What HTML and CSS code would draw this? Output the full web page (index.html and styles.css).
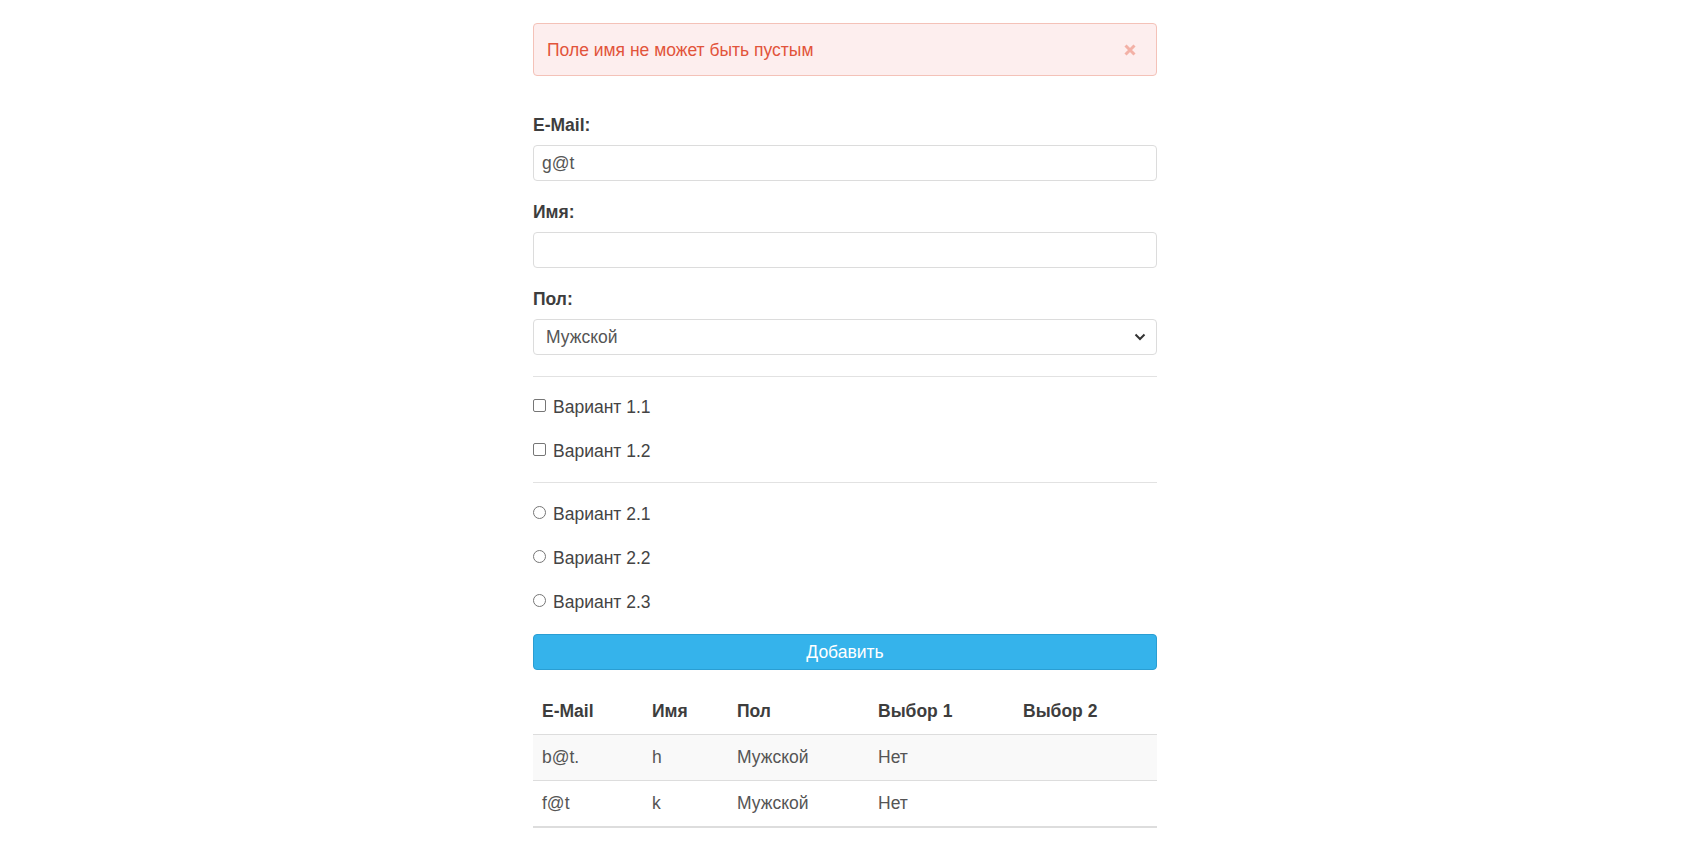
FILE: index.html
```html
<!DOCTYPE html>
<html lang="ru">
<head>
<meta charset="utf-8">
<title>Форма</title>
<link rel="stylesheet" href="styles.css">
</head>
<body>
<div class="container">
  <div class="alert">
    <span class="alert-text">Поле имя не может быть пустым</span>
    <span class="alert-close" aria-label="Закрыть">
      <svg width="12" height="12" viewBox="0 0 12 12"><path d="M1.5 1.5 L10.5 10.5 M10.5 1.5 L1.5 10.5" stroke="#f3b1a6" stroke-width="3" stroke-linecap="butt"/></svg>
    </span>
  </div>

  <form class="form">
    <div class="form-group">
      <label class="label">E-Mail:</label>
      <div class="input">g@t</div>
    </div>
    <div class="form-group">
      <label class="label">Имя:</label>
      <div class="input"></div>
    </div>
    <div class="form-group last">
      <label class="label">Пол:</label>
      <div class="select">
        <span>Мужской</span>
        <svg class="chevron" width="12" height="8" viewBox="0 0 12 8"><path d="M1.5 1.5 L6 6 L10.5 1.5" fill="none" stroke="#333" stroke-width="2"/></svg>
      </div>
    </div>

    <div class="divider"></div>
    <div class="choices">
      <label class="option"><span class="box check"></span>Вариант 1.1</label>
      <label class="option"><span class="box check"></span>Вариант 1.2</label>
    </div>
    <div class="divider"></div>
    <div class="choices radios">
      <label class="option"><span class="box radio"></span>Вариант 2.1</label>
      <label class="option"><span class="box radio"></span>Вариант 2.2</label>
      <label class="option"><span class="box radio"></span>Вариант 2.3</label>
    </div>

    <div class="button">Добавить</div>
  </form>

  <table class="table">
    <colgroup>
      <col class="c1"><col class="c2"><col class="c3"><col class="c4"><col class="c5">
    </colgroup>
    <thead>
      <tr><th>E-Mail</th><th>Имя</th><th>Пол</th><th>Выбор 1</th><th>Выбор 2</th></tr>
    </thead>
    <tbody>
      <tr class="odd"><td>b@t.</td><td>h</td><td>Мужской</td><td>Нет</td><td></td></tr>
      <tr><td>f@t</td><td>k</td><td>Мужской</td><td>Нет</td><td></td></tr>
    </tbody>
  </table>
</div>
</body>
</html>
```

FILE: styles.css
```css
* { box-sizing: border-box; }

html, body {
  margin: 0;
  padding: 0;
  background: #fff;
}

body {
  font-family: "Liberation Sans", Arial, sans-serif;
  font-size: 17.5px;
  line-height: 22px;
  color: #444;
}

.container {
  width: 624px;
  margin: 0 auto;
  padding-top: 23px;
}

.alert {
  display: flex;
  align-items: center;
  justify-content: space-between;
  height: 53px;
  padding: 0 20px 0 13px;
  background: #fdeeee;
  border: 1px solid #f4c2b8;
  border-radius: 4px;
  color: #e2543b;
  margin-bottom: 37px;
}

.alert-close {
  display: flex;
  align-items: center;
}

.form-group {
  margin-bottom: 19px;
}
.form-group.last { margin-bottom: 0; }

.label {
  display: block;
  font-weight: bold;
  color: #3d3d3d;
  padding-top: 1px;
  margin-bottom: 9px;
}

.input, .select {
  height: 36px;
  border: 1px solid #dcdcdc;
  border-radius: 4px;
  background: #fff;
  color: #555;
  display: flex;
  align-items: center;
}

.input { padding: 0 8px; }

.select {
  justify-content: space-between;
  padding: 0 10px 0 12px;
}

.divider {
  border-top: 1px solid #e2e2e2;
  margin-top: 21px;
}
.choices + .divider { margin-top: 0; }

.choices {
  display: flex;
  flex-direction: column;
  gap: 22px;
  padding: 19px 0 20px;
}
.choices.radios { padding: 20px 0 21px; }

.option {
  display: flex;
  align-items: center;
  height: 22px;
  color: #444;
}

.box {
  width: 13px;
  height: 13px;
  border: 1px solid #767676;
  background: #fff;
  margin: -3px 7px 0 0;
  flex: none;
}
.box.check { border-radius: 2px; }
.box.radio { border-radius: 50%; }

.button {
  height: 36px;
  display: flex;
  align-items: center;
  justify-content: center;
  background: #35b3eb;
  border: 1px solid #2a9ed3;
  border-radius: 4px;
  color: #fff;
}

.table {
  width: 100%;
  border-collapse: collapse;
  margin-top: 19px;
  border-bottom: 2px solid #dddddd;
}

.c1 { width: 110px; }
.c2 { width: 85px; }
.c3 { width: 141px; }
.c4 { width: 145px; }

.table th, .table td {
  text-align: left;
  padding: 12px 9px 12px;
  line-height: 21px;
  border-bottom: 1px solid #dddddd;
}

.table th {
  font-weight: bold;
  color: #3d3d3d;
}

.table td { color: #555; }

.table tr.odd td { background: #f9f9f9; }
```
